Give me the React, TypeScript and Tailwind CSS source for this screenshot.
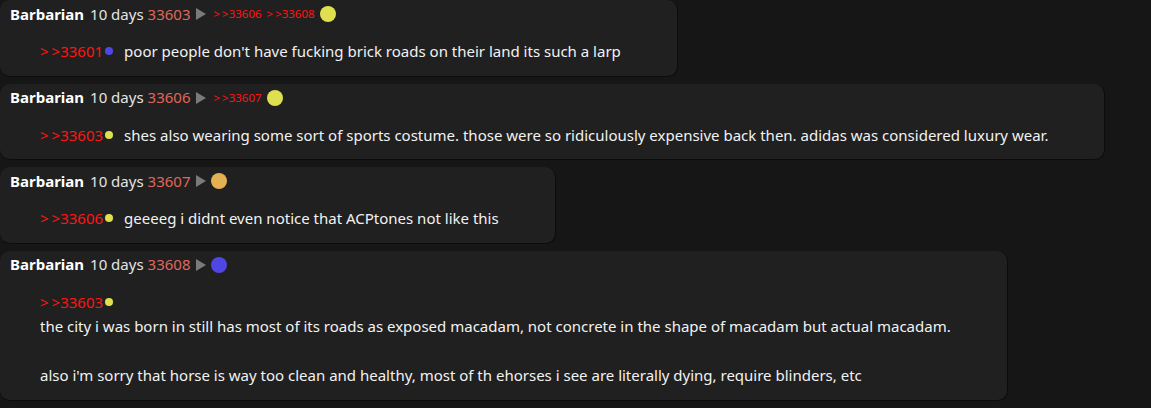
type Reply = { id: number; color: string };

type Post = {
  id: number;
  author: string;
  age: string;
  color: string;
  replies: number[];
  quote: Reply;
  lines: string[];
  block?: boolean;
};

const posts: Post[] = [
  {
    id: 33603,
    author: "Barbarian",
    age: "10 days",
    color: "#dfe04f",
    replies: [33606, 33608],
    quote: { id: 33601, color: "#5046e4" },
    lines: ["poor people don't have fucking brick roads on their land its such a larp"],
  },
  {
    id: 33606,
    author: "Barbarian",
    age: "10 days",
    color: "#dfe04f",
    replies: [33607],
    quote: { id: 33603, color: "#dfe04f" },
    lines: [
      "shes also wearing some sort of sports costume. those were so ridiculously expensive back then. adidas was considered luxury wear.",
    ],
  },
  {
    id: 33607,
    author: "Barbarian",
    age: "10 days",
    color: "#e3b152",
    replies: [],
    quote: { id: 33606, color: "#dfe04f" },
    lines: ["geeeeg i didnt even notice that ACPtones not like this"],
  },
  {
    id: 33608,
    author: "Barbarian",
    age: "10 days",
    color: "#5046e4",
    replies: [],
    quote: { id: 33603, color: "#dfe04f" },
    block: true,
    lines: [
      "the city i was born in still has most of its roads as exposed macadam, not concrete in the shape of macadam but actual macadam.",
      "",
      "also i'm sorry that horse is way too clean and healthy, most of th ehorses i see are literally dying, require blinders, etc",
    ],
  },
];

function QuoteLink({ id, small }: { id: number; small?: boolean }) {
  return (
    <span className={small ? "text-[11.5px] text-[#ff1414]" : "text-[15px] text-[#ff1414]"}>
      <span className={small ? "mr-[2px]" : "mr-[3px]"}>{">"}</span>
      {">"}
      {id}
    </span>
  );
}

function PostCard({ post }: { post: Post }) {
  return (
    <div className="w-fit rounded-[10px] border-b border-r border-[#0c0c0c] bg-[#202020] pt-1 pb-[12px] pl-[10px] pr-[14px]">
      <div className="flex h-5 items-center whitespace-nowrap text-[15px]">
        <span className="font-bold text-white">{post.author}</span>
        <span className="ml-[6px] text-[#e4e4e4]">{post.age}</span>
        <span className="ml-[4px] text-[#e0675c]">{post.id}</span>
        <svg className="ml-[5px]" width="10" height="12" viewBox="0 0 10 12">
          <path d="M0 0 L10 6 L0 12 Z" fill="#7a7a7a" />
        </svg>
        {post.replies.length > 0 && (
          <span className="ml-2 flex gap-[5px]">
            {post.replies.map((r) => (
              <QuoteLink key={r} id={r} small />
            ))}
          </span>
        )}
        <span
          className="ml-[5px] inline-block h-4 w-4 rounded-full"
          style={{ backgroundColor: post.color }}
        />
      </div>
      <div className="mt-[15px] ml-[30px] mr-[42px] text-[15px] leading-[24.5px] text-[#f2f2f2]">
        {post.block ? (
          <>
            <div className="flex items-center">
              <QuoteLink id={post.quote.id} />
              <span
                className="ml-[2px] inline-block h-[8px] w-[8px] rounded-full"
                style={{ backgroundColor: post.quote.color }}
              />
            </div>
            {post.lines.map((l, i) => (
              <div key={i} className="whitespace-nowrap">
                {l || "\u00a0"}
              </div>
            ))}
          </>
        ) : (
          <div className="flex items-center whitespace-nowrap">
            <QuoteLink id={post.quote.id} />
            <span
              className="ml-[2px] mr-[11px] inline-block h-[8px] w-[8px] rounded-full"
              style={{ backgroundColor: post.quote.color }}
            />
            <span>{post.lines[0]}</span>
          </div>
        )}
      </div>
    </div>
  );
}

export default function App() {
  return (
    <div
      className="flex min-h-[408px] flex-col gap-[7px] bg-[#161616]"
      style={{ fontFamily: '"Noto Sans", "Open Sans", sans-serif' }}
    >
      {posts.map((p) => (
        <PostCard key={p.id} post={p} />
      ))}
    </div>
  );
}
